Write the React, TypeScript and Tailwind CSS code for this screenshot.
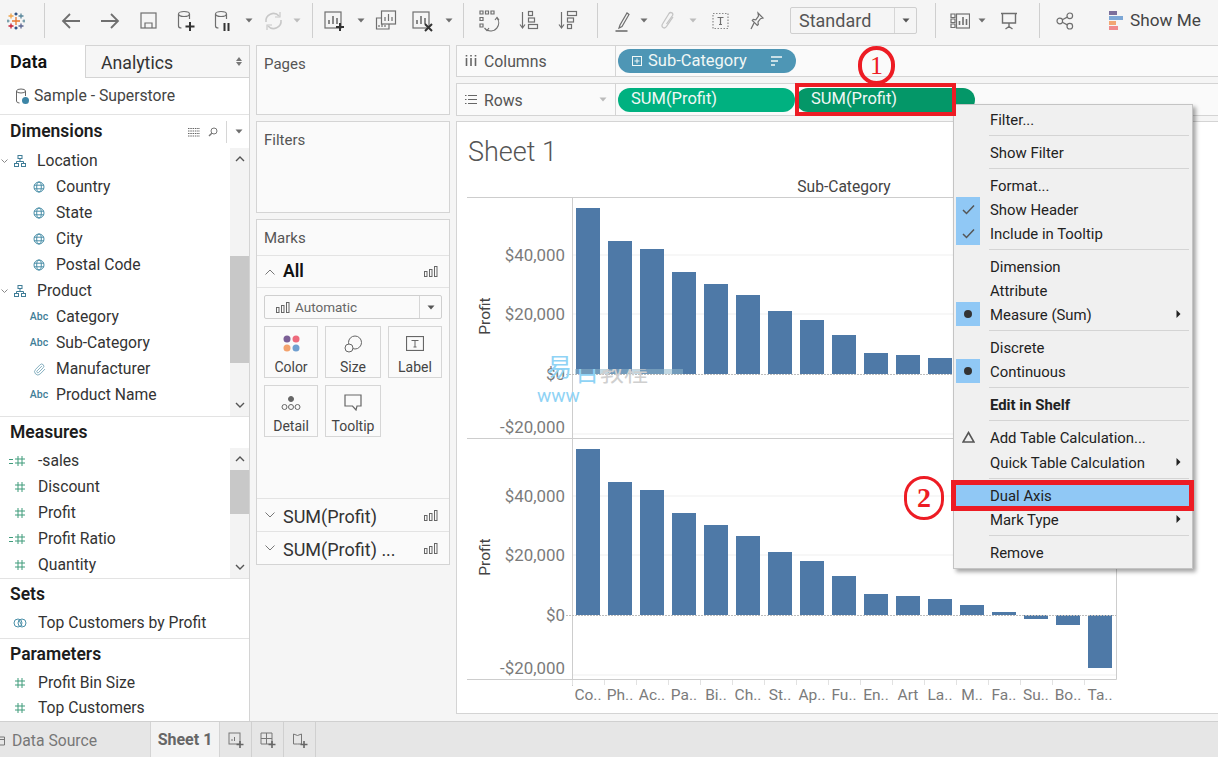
import React from "react";
import { Paperclip } from "lucide-react";

const S = "#6f6f6f";
const Caret = ({ c = "#6f6f6f" }: { c?: string }) => (
  <svg width="8" height="5" viewBox="0 0 8 5"><path d="M0.5 0.5h7L4 4.5z" fill={c} /></svg>
);
const Ic = ({ w = 24, h = 24, children }: { w?: number; h?: number; children: React.ReactNode }) => (
  <svg width={w} height={h} viewBox={`0 0 ${w} ${h}`} fill="none" stroke={S} strokeWidth="1.2" className="shrink-0">{children}</svg>
);

const Logo = () => (
  <svg width="18" height="18" viewBox="0 0 18 18" strokeWidth="1.3" fill="none">
    <path d="M9 5v8M5 9h8" stroke="#e8762c" />
    <path d="M4 1.5v5M1.5 4h5" stroke="#f0a44b" />
    <path d="M14 1.5v5M11.500 4h5" stroke="#59879b" />
    <path d="M4 11.500v5M1.500 14h5" stroke="#c72037" />
    <path d="M14 11.500v5M11.500 14h5" stroke="#5b6591" />
    <path d="M9 0.500v3M7.500 2h3" stroke="#1f447a" />
    <path d="M9 14.500v3M7.500 16h3" stroke="#1f447a" />
    <path d="M1 7.500v3M-.5 9h3" stroke="#7099a6" />
    <path d="M17 7.500v3M15.500 9h3" stroke="#7099a6" />
  </svg>
);

const Slot = ({ className, children }: { className: string; children?: React.ReactNode }) => (
  <div className={`flex shrink-0 items-center justify-center ${className}`}>{children}</div>
);
const Sep = ({ className }: { className: string }) => (
  <div className={`flex shrink-0 justify-center ${className}`}><div className="h-[35px] w-px bg-[#cfcfcf]" /></div>
);

const Toolbar = () => (
  <div className="flex h-[45px] shrink-0 items-center bg-[#f5f5f5] pb-[4px]">
    <Slot className="w-[32px]"><Logo /></Slot>
    <Sep className="w-[24px]" />
    <Slot className="w-[30px]"><Ic><path d="M21 12H4M11 5l-7 7 7 7" strokeWidth="1.8" /></Ic></Slot>
    <Slot className="w-[48px]"><Ic><path d="M3 12h17M13 5l7 7-7 7" strokeWidth="1.8" /></Ic></Slot>
    <Slot className="w-[30px]"><Ic w={18} h={18}><rect x="1" y="1" width="15" height="15" /><path d="M5 16v-5h7v5" /></Ic></Slot>
    <Slot className="w-[46px]"><Ic><ellipse cx="9" cy="5" rx="5.500" ry="2.500" /><path d="M3.500 5v12q0 2 3 2M14.500 5v5" /><path d="M15 13v9M10.500 17.500h9" stroke="#333" strokeWidth="2" /></Ic></Slot>
    <Slot className="w-[28px]"><Ic><ellipse cx="9" cy="5" rx="5.500" ry="2.500" /><path d="M3.500 5v12q0 2 3 2M14.500 5v5" /><path d="M12.500 14v8M16.500 14v8" stroke="#333" strokeWidth="2" /></Ic></Slot>
    <Slot className="w-[22px]"><Caret /></Slot>
    <Slot className="w-[26px]"><Ic><path d="M5 13a7.500 7.500 0 0 1 13-6M20 11a7.500 7.500 0 0 1-13 6" stroke="#c8c8c8" strokeWidth="1.6" /><path d="M19 3v5h-5M6 21v-5h5" stroke="#c8c8c8" /></Ic></Slot>
    <Slot className="w-[22px]"><Caret c="#bdbdbd" /></Slot>
    <Sep className="w-[8px]" />
    <Slot className="w-[40px]"><Ic><rect x="1" y="3" width="16" height="16" /><path d="M5 15v-4M9 15V7M13 15V9" strokeWidth="1.600" /><path d="M16 14v8M12 18h8" stroke="#333" strokeWidth="2" /></Ic></Slot>
    <Slot className="w-[10px]"><Caret /></Slot>
    <Slot className="w-[40px]"><Ic><rect x="7.500" y="2" width="14" height="13" /><path d="M11 12V8M14.500 12V5M18 12V8" /><path d="M7 9H2.500v11H15v-5" /><path d="M5 18v-2M8 18v-3M11 18v-2" /></Ic></Slot>
    <Slot className="w-[36px]"><Ic><rect x="1" y="3" width="16" height="16" /><path d="M5 15v-4M9 15V7M13 15V9" strokeWidth="1.600" /><path d="M13 15l7 7M20 15l-7 7" stroke="#333" strokeWidth="2" /></Ic></Slot>
    <Slot className="w-[14px]"><Caret /></Slot>
    <Sep className="w-[14px]" />
    <Slot className="w-[38px]"><Ic w={22} h={24}><path d="M2 2h3v3H2zM7.500 2h3v3h-3zM13 2h3v3h-3zM2 8.500h3v3H2zM2 15h3v3H2z" /><path d="M19 9a8 8 0 0 1-10 12" /><path d="M6.500 19l2.500 2.500 2-2.500M17 11l2-2.500 2 2.500" /></Ic></Slot>
    <Slot className="w-[42px]"><Ic w={20} h={22}><path d="M3.500 2v15M1 14.500L3.500 18l2.500-3.500" /><rect x="9.500" y="1.500" width="4" height="4" /><rect x="9.500" y="8" width="6" height="4" /><rect x="9.500" y="14.500" width="9" height="4" /></Ic></Slot>
    <Slot className="w-[36px]"><Ic w={20} h={22}><path d="M3.500 2v15M1 14.500L3.500 18l2.500-3.500" /><rect x="9.500" y="1.500" width="9" height="4" /><rect x="9.500" y="8" width="6" height="4" /><rect x="9.500" y="14.500" width="4" height="4" /></Ic></Slot>
    <Sep className="w-[22px]" />
    <Slot className="w-[30px]"><Ic w={16} h={22}><path d="M5 15l-1 3 3-1.500 7-12-2-1.500z" /><path d="M0.500 21h12" stroke="#777" strokeWidth="1.700" /></Ic></Slot>
    <Slot className="w-[12px]"><Caret /></Slot>
    <Slot className="w-[36px]"><svg width="14" height="22" viewBox="0 0 14 22" fill="none" stroke="#c4c4c4" strokeWidth="1.300"><path d="M12 7l-6.500 9.500c-2 3-6 .5-4-2.500L8 3.500c1.500-2 5-.5 3.500 2L5.500 14" /></svg></Slot>
    <Slot className="w-[14px]"><Caret c="#bdbdbd" /></Slot>
    <Slot className="w-[42px]"><Ic w={18} h={18}><rect x="1" y="1.500" width="15" height="15" strokeDasharray="1.500 1.500" stroke="#8a8a8a" /><path d="M5.500 5.500h6M8.500 5.500v7M7 12.500h3" /></Ic></Slot>
    <Slot className="w-[30px]"><Ic w={16} h={20}><path d="M9 2l5 5-2.500.7-2.500 3.300.3 2.500-1 1-5-5 1-1 2.500.3L9.500 5z" /><path d="M5 12l-3 6" /></Ic></Slot>
    <Slot className="w-[18px]" />
    <div className="flex h-[27px] w-[127px] shrink-0 items-center rounded-[2px] border border-[#cfcfcf] bg-[#f5f5f5] pl-[8px] text-[18px] text-[#555]">
      <span className="flex-1">Standard</span>
      <div className="flex h-full w-[22px] items-center justify-center border-l border-[#d6d6d6]"><Caret c="#555" /></div>
    </div>
    <Sep className="w-[36px]" />
    <Slot className="w-[14px]"><Ic w={20} h={18}><path d="M1 2h4v3.500H1zM1 7h4v3.500H1zM1 12h4v3.500H1z" /><rect x="6.500" y="2" width="13" height="14" /><path d="M9.500 13V9M13 13V5M16.500 13V7" strokeWidth="1.600" /></Ic></Slot>
    <Slot className="w-[30px]"><Caret /></Slot>
    <Slot className="w-[24px]"><Ic w={18} h={20}><path d="M1 2.500h16M2.500 2.500v9.500h13V2.500M9 12v5M5.500 18L9 15.500l3.500 2.500" strokeWidth="1.400" /></Ic></Slot>
    <Sep className="w-[36px]" />
    <Slot className="w-[16px]"><Ic w={18} h={18}><circle cx="3.800" cy="9" r="2.800" /><circle cx="13.800" cy="3.800" r="2.800" /><circle cx="13.800" cy="14.200" r="2.800" /><path d="M6.300 7.700l5-2.600M6.300 10.300l5 2.600" /></Ic></Slot>
    <div className="ml-[36px] flex w-[14px] shrink-0 flex-col">
      <div className="h-[4px] w-[8px] bg-[#7b6f9c]" />
      <div className="mt-[1px] h-[4px] w-[14px] bg-[#7ca7d6]" />
      <div className="mt-[1px] h-[4px] w-[7px] bg-[#f2a673]" />
      <div className="mt-[1px] h-[4px] w-[9px] bg-[#f08a8c]" />
    </div>
    <span className="ml-[7px] whitespace-nowrap text-[17.200px] text-[#444]">Show Me</span>
  </div>
);

const Globe = () => (
  <svg width="12" height="12" viewBox="0 0 12 12" fill="none" stroke="#4a8fa8" strokeWidth="1"><circle cx="6" cy="6" r="5" /><ellipse cx="6" cy="6" rx="2.300" ry="5" /><path d="M1 4.200h10M1 7.800h10" /></svg>
);
const Hier = () => (
  <svg width="12" height="12" viewBox="0 0 12 12" fill="none" stroke="#3f7d97" strokeWidth="1"><rect x="4" y="0.500" width="4" height="3" /><rect x="0.500" y="8.500" width="4" height="3" /><rect x="7.500" y="8.500" width="4" height="3" /><path d="M6 3.500v3M2.500 8.500v-2h7v2" /></svg>
);
const Abc = () => <span className="text-[10.500px] font-medium leading-none text-[#3f7d97]">Abc</span>;
const Clip = () => <Paperclip size={13} color="#6d9fb3" strokeWidth={1.5} />;
const Hash = ({ calc }: { calc?: boolean }) => (
  <span className="relative inline-flex h-[12px] w-[12px]">
    <svg width="12" height="12" viewBox="0 0 12 12" fill="none" stroke="#3f9b7b" strokeWidth="1"><path d="M4 1v10M8 1v10M1 4h10M1 8h10" /></svg>
    {calc && <span className="absolute left-[-5px] top-[3.500px] h-[5px] w-[4px] border-y border-[#3f9b7b]" />}
  </span>
);
const Chev = ({ up }: { up?: boolean }) => (
  <svg width="10" height="6" viewBox="0 0 10 6" fill="none" stroke="#555" strokeWidth="1.400"><path d={up ? "M1 5l4-4 4 4" : "M1 1l4 4 4-4"} /></svg>
);

const Row = ({ icon, text, hier, flat }: { icon: React.ReactNode; text: string; hier?: boolean; flat?: boolean }) => (
  <div className={`flex h-[26px] items-center whitespace-nowrap text-[15.700px] text-[#333] ${hier ? "" : flat ? "" : "pl-[20px]"}`}>
    {hier && <svg className="ml-[1px] mr-[2px]" width="7" height="5" viewBox="0 0 7 5" fill="none" stroke="#888"><path d="M.5.500l3 3 3-3" /></svg>}
    <div className={`flex w-[18px] shrink-0 justify-center ${flat ? "ml-[11px]" : hier ? "ml-[1px]" : "ml-[10px]"}`}>{icon}</div>
    <span className={flat ? "ml-[9px]" : "ml-[8px]"}>{text}</span>
  </div>
);

const Scroll = ({ className, thumb }: { className: string; thumb: string }) => (
  <div className={`flex w-[19px] shrink-0 flex-col items-stretch bg-[#f3f3f3] ${className}`}>
    <div className="flex h-[22px] shrink-0 items-center justify-center"><Chev up /></div>
    <div className={`shrink-0 bg-[#c8c8c8] ${thumb}`} />
    <div className="flex-1" />
    <div className="flex h-[22px] shrink-0 items-center justify-center"><Chev /></div>
  </div>
);

const Head = ({ text, className }: { text: string; className: string }) => (
  <div className={`flex shrink-0 items-center pl-[10px] text-[17.500px] font-semibold text-[#1c1c1c] ${className}`}>{text}</div>
);

const DataPanel = () => (
  <div className="flex w-[250px] shrink-0 flex-col overflow-hidden border-r border-[#d4d4d4] bg-white">
    <div className="flex h-[33px] shrink-0">
      <div className="flex w-[85px] items-center pl-[10px] text-[18px] font-semibold text-[#111]">Data</div>
      <div className="flex flex-1 items-center border-b border-l border-t border-[#d4d4d4] bg-[#f6f6f6] pl-[15px] pt-[3px] text-[17.700px] text-[#333]">
        <span className="flex-1">Analytics</span>
        <span className="mr-[7px] mb-[3px] flex flex-col gap-[1.500px]">
          <svg width="6" height="4" viewBox="0 0 6 4"><path d="M0 4h6L3 0z" fill="#777" /></svg>
          <svg width="6" height="4" viewBox="0 0 6 4"><path d="M0 0h6L3 4z" fill="#777" /></svg>
        </span>
      </div>
    </div>
    <div className="flex h-[37px] shrink-0 items-center border-b border-[#e3e3e3] pl-[15px] text-[15.750px] text-[#444]">
      <span className="relative mr-[5px] h-[16px] w-[14px]">
        <svg width="14" height="16" viewBox="0 0 14 16" fill="none" stroke="#666"><ellipse cx="6" cy="3" rx="4.500" ry="2" /><path d="M1.500 3v10q0 2 3 2M10.500 3v5" /></svg>
        <span className="absolute bottom-[0px] right-[0px] flex h-[7px] w-[7px] rounded-full bg-[#3c85a6]" />
      </span>
      Sample - Superstore
    </div>
    <div className="flex h-[33px] shrink-0 items-center pl-[10px] pr-[6px]">
      <span className="flex-1 text-[17.500px] font-semibold text-[#1c1c1c]">Dimensions</span>
      <svg width="12" height="10" viewBox="0 0 12 10" stroke="#666" strokeDasharray="1.500 .8"><path d="M0 1.500h12M0 4h12M0 6.500h12M0 9h12" /></svg>
      <svg className="ml-[8px]" width="10" height="10" viewBox="0 0 10 10" fill="none" stroke="#777"><circle cx="6" cy="4" r="3" /><path d="M3.800 6.200L1 9" strokeWidth="1.400" /></svg>
      <div className="ml-[8px] h-[22px] w-px bg-[#d6d6d6]" />
      <div className="ml-[8px]"><Caret /></div>
    </div>
    <div className="flex h-[269px] shrink-0 border-b border-[#e3e3e3]">
      <div className="flex-1">
        <Row hier icon={<Hier />} text="Location" />
        <Row icon={<Globe />} text="Country" />
        <Row icon={<Globe />} text="State" />
        <Row icon={<Globe />} text="City" />
        <Row icon={<Globe />} text="Postal Code" />
        <Row hier icon={<Hier />} text="Product" />
        <Row icon={<Abc />} text="Category" />
        <Row icon={<Abc />} text="Sub-Category" />
        <Row icon={<Clip />} text="Manufacturer" />
        <Row icon={<Abc />} text="Product Name" />
      </div>
      <Scroll className="h-[268px]" thumb="mt-[86px] h-[107px]" />
    </div>
    <Head text="Measures" className="h-[31px]" />
    <div className="flex h-[131px] shrink-0 border-b border-[#e3e3e3]">
      <div className="flex-1">
        <Row flat icon={<Hash calc />} text="-sales" />
        <Row flat icon={<Hash />} text="Discount" />
        <Row flat icon={<Hash />} text="Profit" />
        <Row flat icon={<Hash calc />} text="Profit Ratio" />
        <Row flat icon={<Hash />} text="Quantity" />
      </div>
      <Scroll className="h-[130px]" thumb="h-[44px]" />
    </div>
    <Head text="Sets" className="h-[31px]" />
    <div className="h-[29px] shrink-0 border-b border-[#e3e3e3]">
      <Row flat icon={<svg width="14" height="12" viewBox="0 0 14 12" fill="none" stroke="#4a8fa8"><circle cx="5" cy="6" r="4" /><circle cx="9" cy="6" r="4" /><path d="M6 3l3 6" /></svg>} text="Top Customers by Profit" />
    </div>
    <Head text="Parameters" className="h-[31px]" />
    <Row flat icon={<Hash />} text="Profit Bin Size" />
    <Row flat icon={<Hash />} text="Top Customers" />
  </div>
);

const BarIc = () => (
  <svg width="14" height="11" viewBox="0 0 14 11" fill="none" stroke="#666"><rect x="0.500" y="5.500" width="2.500" height="5" /><rect x="5.500" y="3.500" width="2.500" height="7" /><rect x="10.500" y="0.500" width="2.500" height="10" /></svg>
);
const Card = ({ className, icon, label }: { className: string; icon: React.ReactNode; label: string }) => (
  <div className={`flex h-[52px] shrink-0 flex-col items-center border border-[#d6d6d6] pt-[7px] text-[14px] text-[#444] ${className}`}>
    <div className="flex h-[19px] items-center">{icon}</div>
    <div className="mt-[7px] leading-none">{label}</div>
  </div>
);
const Panel = ({ className, children }: { className: string; children?: React.ReactNode }) => (
  <div className={`shrink-0 border border-[#d4d4d4] bg-[#fafafa] ${className}`}>{children}</div>
);
const Title = ({ t }: { t: string }) => <div className="pl-[7px] pt-[7px] text-[15px] leading-[22px] text-[#555]">{t}</div>;
const SumRow = ({ t, cls }: { t: string; cls: string }) => (
  <div className={`flex h-[33px] items-center pl-[8px] pr-[11px] ${cls}`}>
    <svg width="10" height="6" viewBox="0 0 10 6" fill="none" stroke="#777"><path d="M.5.500L5 5 9.500.500" /></svg>
    <span className="ml-[8px] flex-1 whitespace-nowrap pt-[2px] text-[18px] text-[#333]">{t}</span>
    <BarIc />
  </div>
);

const Middle = () => (
  <div className="flex w-[206px] shrink-0 flex-col gap-[6px] px-[6px]">
    <Panel className="h-[70px]"><Title t="Pages" /></Panel>
    <Panel className="h-[92px]"><Title t="Filters" /></Panel>
    <Panel className="h-[346px]">
      <div className="h-[36px] border-b border-[#e3e3e3]"><Title t="Marks" /></div>
      <div className="flex h-[32px] items-center border-b border-[#e3e3e3] pl-[8px] pr-[11px]">
        <svg width="10" height="6" viewBox="0 0 10 6" fill="none" stroke="#777"><path d="M.5 5.500L5 1l4.500 4.500" /></svg>
        <span className="ml-[8px] flex-1 text-[17.500px] font-semibold text-[#111]">All</span>
        <BarIc />
      </div>
      <div className="px-[7px] pt-[7px]">
        <div className="flex h-[24px] items-center rounded-[2px] border border-[#cfcfcf] pl-[11px] text-[13.500px] text-[#666]">
          <BarIc />
          <span className="ml-[5px] flex-1">Automatic</span>
          <div className="flex h-full w-[22px] items-center justify-center border-l border-[#d6d6d6]"><Caret c="#555" /></div>
        </div>
        <div className="mt-[7px] flex gap-[7px]">
          <Card className="w-[54px]" label="Color" icon={
            <svg width="17" height="17" viewBox="0 0 17 17"><circle cx="4" cy="4" r="3.500" fill="#7b5f96" /><circle cx="13" cy="4" r="3.500" fill="#ee6a7c" /><circle cx="4" cy="13" r="3.500" fill="#f3a26d" /><circle cx="13" cy="13" r="3.500" fill="#6f9fd0" /></svg>
          } />
          <Card className="w-[56px]" label="Size" icon={
            <svg width="19" height="18" viewBox="0 0 19 18" fill="none" stroke="#666"><circle cx="11" cy="7.500" r="6.500" /><circle cx="5" cy="13" r="4" fill="#fafafa" /></svg>
          } />
          <Card className="w-[54px]" label="Label" icon={
            <svg width="18" height="15" viewBox="0 0 18 15" fill="none" stroke="#666"><rect x="0.500" y="0.500" width="17" height="14" strokeWidth="1.200" /><path d="M5.500 4.500h7M9 4.500v6.500M7.500 11h3" /></svg>
          } />
        </div>
        <div className="mt-[7px] flex gap-[7px]">
          <Card className="w-[54px]" label="Detail" icon={
            <svg width="20" height="16" viewBox="0 0 20 16" fill="none" stroke="#666"><circle cx="10" cy="4" r="2.500" fill="#666" /><circle cx="3.500" cy="12" r="2.500" /><circle cx="10" cy="12" r="2.500" /><circle cx="16.500" cy="12" r="2.500" /></svg>
          } />
          <Card className="w-[56px]" label="Tooltip" icon={
            <svg width="18" height="17" viewBox="0 0 18 17" fill="none" stroke="#666" strokeWidth="1.200"><path d="M1 1h16v11h-4l-1 4-3.500-4H1z" /></svg>
          } />
        </div>
      </div>
      <div className="mt-[61px]">
        <SumRow t="SUM(Profit)" cls="border-t border-[#e3e3e3]" />
        <SumRow t="SUM(Profit) ..." cls="border-t border-[#e3e3e3]" />
      </div>
    </Panel>
  </div>
);

const Pill = ({ className, children }: { className: string; children: React.ReactNode }) => (
  <div className={`flex h-[24px] shrink-0 items-center rounded-full text-[16.500px] text-[#f1f8f6] ${className}`}>{children}</div>
);

const heights = [166, 133, 125, 102, 90, 79, 63, 54, 39, 21, 19, 16, 10, 3, -4, -10, -53];
const names = ["Co..", "Ph..", "Ac..", "Pa..", "Bi..", "Ch..", "St..", "Ap..", "Fu..", "En..", "Art", "La..", "M..", "Fa..", "Su..", "Bo..", "Ta.."];

const Pane = ({ base }: { base: number }) => (
  <g>
    <path d={`M573 ${base - 119}H1116M573 ${base - 60}H1116`} stroke="#efefef" />
    <path d={`M573 ${base + 60}H1116`} stroke="#efefef" />
    {heights.map((h, i) => (
      <rect key={i} x={576 + 32 * i} y={h > 0 ? base - h : base} width="24" height={Math.abs(h)} fill="#4e79a7" />
    ))}
    <path d={`M566 ${base + 0.500}H1116`} stroke="#bdbdbd" strokeDasharray="2 1" />
    {[["$40,000", -119], ["$20,000", -60], ["$0", 0], ["-$20,000", 53]].map(([t, d]) => (
      <text key={t as string} x="565" y={base + (d as number) + 6} textAnchor="end" fontSize="16.900" fill="#7b7b7b">{t}</text>
    ))}
    <text transform={`translate(490 ${base - 58}) rotate(-90)`} textAnchor="middle" fontSize="15.500" fill="#444">Profit</text>
  </g>
);

const Chart = () => (
  <svg width="761" height="542" viewBox="457 172 761 542" className="block">
    <defs><clipPath id="wm"><rect x="572" y="369" width="120" height="16" /></clipPath></defs>
    <text x="844" y="192" textAnchor="middle" fontSize="15.600" fill="#444">Sub-Category</text>
    <path d="M467 197.500H1116.500V679.500H467M467 438.500H1116M572.500 197V686" fill="none" stroke="#cdcdcd" />
    <Pane base={374} />
    <Pane base={615} />
    {names.map((n, i) => (
      <g key={n}>
        <path d={`M${572.500 + 32 * i} 680v5`} stroke="#e2e2e2" />
        <text x={588 + 32 * i} y="700" textAnchor="middle" fontSize="15.500" fill="#7b7b7b">{n}</text>
      </g>
    ))}
    <text x="547" y="376" fontSize="25" fill="#8fd3f5" fontFamily="'Noto Sans CJK SC'">易</text>
    <rect x="575" y="369" width="108" height="5" fill="#8fb8cc" opacity="0.550" />
    <g clipPath="url(#wm)">
      <text x="575" y="381" fontSize="24" fill="#8fd3f5" fontFamily="'Noto Sans CJK SC'">百</text>
      <text x="600" y="381" fontSize="24" fill="#cfcfcf" fontFamily="'Noto Sans CJK SC'">教程</text>
    </g>
    <text x="537" y="402" fontSize="19" fill="#8fd3f5">www</text>
  </svg>
);

const Right = () => (
  <div className="flex min-w-0 flex-1 flex-col">
    <div className="flex h-[32px] shrink-0 border-y border-l border-[#d4d4d4] bg-[#fafafa]">
      <div className="flex w-[159px] items-center border-r border-[#d4d4d4] pl-[8px] text-[15.800px] text-[#555]">
        <svg width="12" height="12" viewBox="0 0 12 12" stroke="#666" strokeWidth="1.600"><path d="M1.500 3v8M6 3v8M10.500 3v8M1.500 0v1.500M6 0v1.500M10.500 0v1.500" /></svg>
        <span className="ml-[7px] pt-[2px]">Columns</span>
      </div>
      <div className="flex items-center pl-[2px]">
        <Pill className="w-[178px] bg-[#4e96b5] pl-[14px] pr-[14px]">
          <svg width="10" height="10" viewBox="0 0 10 10" fill="none" stroke="#f1f8f6"><rect x="0.500" y="0.500" width="9" height="9" /><path d="M2.500 5h5M5 2.500v5" /></svg>
          <span className="ml-[6px] flex-1">Sub-Category</span>
          <svg width="11" height="10" viewBox="0 0 11 10" stroke="#f1f8f6" strokeWidth="1.600"><path d="M0 1h11M0 5h7M0 9h4" /></svg>
        </Pill>
      </div>
    </div>
    <div className="mt-[6px] flex h-[33px] shrink-0 border-y border-l border-[#d4d4d4] bg-[#fafafa]">
      <div className="flex w-[159px] items-center border-r border-[#d4d4d4] pl-[8px] pr-[8px] text-[15.800px] text-[#555]">
        <svg width="12" height="11" viewBox="0 0 12 11" stroke="#666" strokeWidth="1.200"><path d="M0 1.500h1.500M3 1.500h9M0 5.500h1.500M3 5.500h9M0 9.500h1.500M3 9.500h9" /></svg>
        <span className="ml-[7px] flex-1 pt-[2px]">Rows</span>
        <Caret c="#bbb" />
      </div>
      <div className="flex items-center gap-[1px] pl-[2px]">
        <Pill className="w-[177px] bg-[#00b180] pl-[13px]">SUM(Profit)</Pill>
        <Pill className="w-[179px] bg-[#049768] pl-[15px]">SUM(Profit)</Pill>
      </div>
    </div>
    <div className="mt-[5px] h-[593px] shrink-0 border-y border-l border-[#d4d4d4] bg-white">
      <div className="h-[50px] pl-[11px] pt-[12px] text-[27px] font-light leading-[36px] text-[#555]">Sheet 1</div>
      <Chart />
    </div>
  </div>
);

const TabIc = ({ children }: { children: React.ReactNode }) => (
  <div className="flex w-[32px] shrink-0 items-center justify-center border-r border-[#d0d0d0]">
    <svg width="18" height="18" viewBox="0 0 18 18" fill="none" stroke="#777">{children}<path d="M13 10v7M9.500 13.500h7" stroke="#666" strokeWidth="1.600" /></svg>
  </div>
);

const Tabs = () => (
  <div className="flex h-[36px] shrink-0 border-t border-[#d0d0d0] bg-[#e6e6e6]">
    <div className="flex w-[150px] items-center pt-[3px] text-[15.700px] text-[#777]">
      <svg className="mr-[5px] ml-[-1px]" width="8" height="12" viewBox="0 0 8 12" fill="none" stroke="#777"><path d="M0 2h5.500v8H0M0 4.500h5.500" /></svg>
      Data Source
    </div>
    <div className="flex w-[70px] items-center justify-center border-x border-[#d4d4d4] bg-[#f3f3f3] text-[16px] font-bold text-[#666]">Sheet 1</div>
    <TabIc><rect x="2" y="2" width="11" height="11" /><path d="M5 10V8M7.500 10V6" /></TabIc>
    <TabIc><path d="M2 2h11v11H2zM2 7.500h11M7.500 2v11" /></TabIc>
    <TabIc><path d="M2.500 3l4 1.500 4-1.500v10l-4 0-4 0z" /></TabIc>
  </div>
);

const MRow = ({ t, icon, arrow, blue, bold }: { t: string; icon?: React.ReactNode; arrow?: boolean; blue?: boolean; bold?: boolean }) => (
  <div className={`flex h-[24px] items-center pr-[11px] text-[14.900px] text-[#222] ${bold ? "font-bold" : ""}`}>
    <div className={`flex h-full w-[24px] shrink-0 items-center justify-center ${blue ? "bg-[#90c8f5]" : ""}`}>{icon}</div>
    <span className="ml-[10px] flex-1 whitespace-nowrap pt-[3px]">{t}</span>
    {arrow && <svg width="5" height="8" viewBox="0 0 5 8"><path d="M0.500 0l4 4-4 4z" fill="#222" /></svg>}
  </div>
);
const MSep = () => <div className="ml-[33px] mr-[3px] my-[4px] h-px bg-[#d4d4d4]" />;
const Check = () => <svg width="13" height="11" viewBox="0 0 13 11" fill="none" stroke="#555" strokeWidth="1.500"><path d="M1 6l3.500 3.500L12 1.500" /></svg>;
const Dot = () => <span className="h-[8px] w-[8px] rounded-full bg-[#333]" />;

const Menu = () => (
  <div className="absolute left-[953px] top-[104px] h-[465px] w-[240px] border border-[#c4c4c4] bg-[#f0f0f0] pl-[2px] pt-[2px] shadow-[3px_3px_4px_rgba(0,0,0,0.35)]">
    <MRow t="Filter..." />
    <MSep />
    <MRow t="Show Filter" />
    <MSep />
    <MRow t="Format..." />
    <MRow t="Show Header" blue icon={<Check />} />
    <MRow t="Include in Tooltip" blue icon={<Check />} />
    <MSep />
    <MRow t="Dimension" />
    <MRow t="Attribute" />
    <MRow t="Measure (Sum)" blue arrow icon={<Dot />} />
    <MSep />
    <MRow t="Discrete" />
    <MRow t="Continuous" blue icon={<Dot />} />
    <MSep />
    <MRow t="Edit in Shelf" bold />
    <MSep />
    <MRow t="Add Table Calculation..." icon={<svg width="13" height="12" viewBox="0 0 13 12" fill="none" stroke="#555" strokeWidth="1.600"><path d="M6.500 1.500L12 11H1z" /></svg>} />
    <div className="h-px" />
    <MRow t="Quick Table Calculation" arrow />
    <MSep />
    <div className="bg-[#90c8f5]"><MRow t="Dual Axis" /></div>
    <MRow t="Mark Type" arrow />
    <MSep />
    <MRow t="Remove" />
  </div>
);

export default function App() {
  return (
    <div className="relative flex h-[757px] w-[1218px] flex-col overflow-hidden bg-[#f5f5f5] font-['Roboto','Noto_Sans_CJK_SC',sans-serif]">
      <Toolbar />
      <div className="flex min-h-0 flex-1">
        <DataPanel />
        <Middle />
        <Right />
      </div>
      <Tabs />
      <Menu />
      <div className="absolute left-[795px] top-[83px] h-[33px] w-[161px] border-[4px] border-[#ed1c24]" />
      <div className="absolute left-[951px] top-[480px] h-[31px] w-[243px] border-[5px] border-[#ed1c24]" />
      <div className="absolute left-[858px] top-[46px] flex h-[39px] w-[37px] items-center justify-center rounded-full border-[4px] border-[#ed1c24] font-['Liberation_Serif',serif] text-[26px] leading-none text-[#ed1c24]">1</div>
      <div className="absolute left-[904px] top-[476px] flex h-[44px] w-[40px] items-center justify-center rounded-full border-[3px] border-[#ed1c24] font-['Liberation_Serif',serif] text-[28px] font-bold leading-none text-[#ed1c24]">2</div>
    </div>
  );
}
